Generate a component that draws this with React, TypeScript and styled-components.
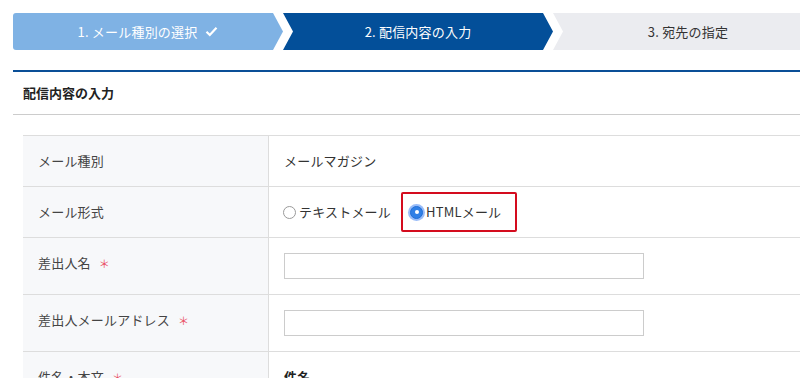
import React from "react";
import styled, { createGlobalStyle, css } from "styled-components";

const GlobalStyle = createGlobalStyle`
  html, body {
    margin: 0;
    padding: 0;
    overflow: hidden;
    background: #ffffff;
  }
  body {
    font-family: "Noto Sans CJK JP", "Noto Sans", sans-serif;
    font-size: 13px;
    color: #333333;
  }
  * { box-sizing: border-box; }
`;

const Page = styled.div`
  width: 823px;
  padding: 13px 0 0 13px;
`;

const Steps = styled.ol`
  display: flex;
  margin: 0;
  padding: 0;
  list-style: none;
  height: 37px;
`;

type StepKind = "done" | "current" | "todo";

const stepColors: Record<StepKind, { bg: string; fg: string }> = {
  done: { bg: "#7fb2e4", fg: "#ffffff" },
  current: { bg: "#034f99", fg: "#ffffff" },
  todo: { bg: "#ebecf0", fg: "#333333" },
};

const Step = styled.li<{ $kind: StepKind; $first?: boolean; $last?: boolean }>`
  flex: 1 1 0;
  display: flex;
  align-items: center;
  justify-content: center;
  gap: 6px;
  background: ${(p) => stepColors[p.$kind].bg};
  color: ${(p) => stepColors[p.$kind].fg};
  font-size: 13px;
  line-height: 20px;
  letter-spacing: 0.2px;
  ${(p) =>
    p.$first
      ? css`
          border-radius: 3px 0 0 3px;
          clip-path: polygon(0 0, calc(100% - 10px) 0, 100% 50%, calc(100% - 10px) 100%, 0 100%);
        `
      : p.$last
      ? css`
          clip-path: polygon(0 0, 100% 0, 100% 100%, 0 100%, 10px 50%);
        `
      : css`
          clip-path: polygon(0 0, calc(100% - 10px) 0, 100% 50%, calc(100% - 10px) 100%, 0 100%, 10px 50%);
        `}
`;

const Check = styled.svg`
  width: 13px;
  height: 11px;
  margin-left: 2px;
`;

const Section = styled.section`
  margin-top: 20px;
  border-top: 2px solid #0a4f97;
`;

const SectionTitle = styled.h2`
  margin: 0;
  padding: 11px 10px;
  font-size: 13px;
  line-height: 20px;
  font-weight: bold;
  color: #222222;
  border-bottom: 1px solid #cccccc;
`;

const Table = styled.div`
  margin: 20px 0 0 10px;
  border-top: 1px solid #dddddd;
`;

const Row = styled.div`
  display: grid;
  grid-template-columns: 246px 1fr;
  border-bottom: 1px solid #dddddd;
`;

const Label = styled.div`
  background: #f7f8fa;
  border-right: 1px solid #dddddd;
  padding: 15px 15px;
  line-height: 20px;
  color: #444444;
  letter-spacing: 0.2px;
`;

const Required = styled.span`
  color: #ea4f64;
  font-size: 11px;
  margin-left: 8px;
`;

const Value = styled.div<{ $tight?: boolean }>`
  padding: ${(p) => (p.$tight ? "5px 15px" : "15px 15px")};
  line-height: 20px;
  color: #333333;
  display: flex;
  align-items: center;
  letter-spacing: 0.2px;
`;

const Strong = styled.span`
  font-weight: bold;
  color: #222222;
`;

const TextInput = styled.input`
  display: block;
  width: 360px;
  height: 26px;
  border: 1px solid #cccccc;
  border-radius: 0;
  padding: 2px 6px;
  font: inherit;
  background: #ffffff;
`;

const RadioGroup = styled.div`
  display: flex;
  align-items: center;
  gap: 10px;
  margin-left: -1px;
`;

const RadioOption = styled.label`
  display: inline-flex;
  align-items: center;
  gap: 3px;
  cursor: pointer;
  color: #333333;
`;

const Highlight = styled.div`
  border: 2px solid #d40c1e;
  border-radius: 2px;
  padding: 8px 14px 8px 7px;
  display: flex;
  align-items: center;
`;

const RadioDot = styled.span<{ $checked?: boolean }>`
  position: relative;
  display: inline-block;
  width: 13px;
  height: 13px;
  border-radius: 50%;
  flex: none;
  ${(p) =>
    p.$checked
      ? css`
          background: #2f7fe6;
          border: 1px solid #1f6fd8;
          box-shadow: 0 0 0 2px rgba(110, 160, 245, 0.7);
          &::after {
            content: "";
            position: absolute;
            left: 50%;
            top: 50%;
            width: 4px;
            height: 4px;
            margin: -2px 0 0 -2px;
            border-radius: 50%;
            background: #ffffff;
          }
        `
      : css`
          background: #ffffff;
          border: 1px solid #9a9a9a;
        `}
`;

export default function App() {
  return (
    <>
      <GlobalStyle />
      <Page>
        <Steps>
          <Step $kind="done" $first>
            <span>1. メール種別の選択</span>
            <Check viewBox="0 0 13 11" aria-hidden>
              <path d="M1.5 5.8 L4.8 9 L11.5 1.8" fill="none" stroke="#ffffff" strokeWidth="2.2" />
            </Check>
          </Step>
          <Step $kind="current">
            <span>2. 配信内容の入力</span>
          </Step>
          <Step $kind="todo" $last>
            <span>3. 宛先の指定</span>
          </Step>
        </Steps>

        <Section>
          <SectionTitle>配信内容の入力</SectionTitle>
          <Table>
            <Row>
              <Label>メール種別</Label>
              <Value>メールマガジン</Value>
            </Row>
            <Row>
              <Label>メール形式</Label>
              <Value $tight>
                <RadioGroup>
                  <RadioOption>
                    <RadioDot />
                    テキストメール
                  </RadioOption>
                  <Highlight>
                    <RadioOption>
                      <RadioDot $checked />
                      HTMLメール
                    </RadioOption>
                  </Highlight>
                </RadioGroup>
              </Value>
            </Row>
            <Row>
              <Label>
                差出人名<Required>＊</Required>
              </Label>
              <Value>
                <TextInput type="text" />
              </Value>
            </Row>
            <Row>
              <Label>
                差出人メールアドレス<Required>＊</Required>
              </Label>
              <Value>
                <TextInput type="text" />
              </Value>
            </Row>
            <Row>
              <Label>
                件名・本文<Required>＊</Required>
              </Label>
              <Value>
                <Strong>件名</Strong>
              </Value>
            </Row>
          </Table>
        </Section>
      </Page>
    </>
  );
}
